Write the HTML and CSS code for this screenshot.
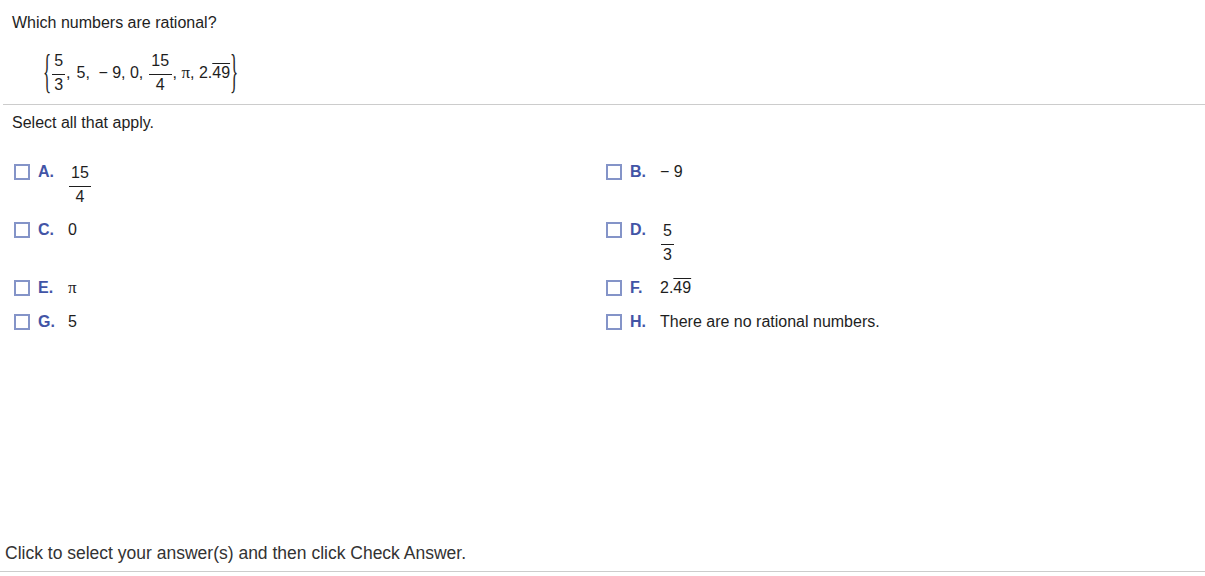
FILE: index.html
```html
<!DOCTYPE html>
<html>
<head>
<meta charset="utf-8">
<title>Which numbers are rational?</title>
<link rel="stylesheet" href="styles.css">
</head>
<body>
<div class="page">
  <div class="question">
    <p class="prompt">Which numbers are rational?</p>
    <div class="set">
      <span class="brace">{</span>
      <span class="frac"><span class="num">5</span><span class="den">3</span></span>
      <span class="txt">,<span class="gap-a"></span>5,<span class="gap-b"></span>− 9, 0, </span>
      <span class="frac wide"><span class="num">15</span><span class="den">4</span></span>
      <span class="txt">, <span class="pi">π</span>, 2.<span class="rep">49</span></span>
      <span class="brace">}</span>
    </div>
  </div>
  <div class="divider"></div>
  <div class="answers">
    <p class="instr">Select all that apply.</p>
    <div class="options">
      <div class="opt">
        <span class="box"></span><span class="letter">A.</span>
        <span class="val"><span class="frac"><span class="num">15</span><span class="den">4</span></span></span>
      </div>
      <div class="opt">
        <span class="box"></span><span class="letter">B.</span>
        <span class="val">− 9</span>
      </div>
      <div class="opt">
        <span class="box"></span><span class="letter">C.</span>
        <span class="val">0</span>
      </div>
      <div class="opt">
        <span class="box"></span><span class="letter">D.</span>
        <span class="val"><span class="frac"><span class="num">5</span><span class="den">3</span></span></span>
      </div>
      <div class="opt">
        <span class="box"></span><span class="letter">E.</span>
        <span class="val"><span class="pi">π</span></span>
      </div>
      <div class="opt">
        <span class="box"></span><span class="letter">F.</span>
        <span class="val">2.<span class="rep">49</span></span>
      </div>
      <div class="opt">
        <span class="box"></span><span class="letter">G.</span>
        <span class="val">5</span>
      </div>
      <div class="opt">
        <span class="box"></span><span class="letter">H.</span>
        <span class="val">There are no rational numbers.</span>
      </div>
    </div>
  </div>
  <div class="footer">Click to select your answer(s) and then click Check Answer.</div>
</div>
</body>
</html>
```
FILE: styles.css
```css
html, body {
  margin: 0;
  padding: 0;
  background: #ffffff;
}
body {
  font-family: "Liberation Sans", Arial, sans-serif;
  font-size: 16px;
  color: #1e1e1e;
}
.page {
  height: 576px;
  display: flex;
  flex-direction: column;
}
.question {
  padding: 13px 0 0 12px;
}
.prompt {
  margin: 0;
  line-height: 20px;
}
.set {
  display: flex;
  align-items: center;
  margin: 17px 0 0 31px;
  height: 46px;
  white-space: pre;
}
.txt {
  line-height: 20px;
}
.gap-a {
  display: inline-block;
  width: 6px;
}
.gap-b {
  display: inline-block;
  width: 8.5px;
}
.brace {
  font-family: "Liberation Serif", "Times New Roman", serif;
  font-size: 17px;
  line-height: 18px;
  display: inline-block;
  transform: scaleY(2.75);
  font-weight: 300;
}
.frac {
  display: inline-flex;
  flex-direction: column;
  align-items: stretch;
  text-align: center;
  padding: 0 1px;
}
.frac .num {
  line-height: 18px;
  padding: 0 2px 4px;
  border-bottom: 1px solid #1e1e1e;
}
.frac.wide .num {
  padding: 0 2.5px 4px;
}
.frac .den {
  line-height: 18px;
  padding-top: 1px;
}
.pi {
  font-family: "Liberation Serif", "Times New Roman", serif;
  font-size: 17px;
}
.rep {
  text-decoration: overline;
}
.divider {
  margin: 8px 0 0 3px;
  border-top: 1px solid #cccccc;
}
.answers {
  padding: 8px 0 0 12px;
}
.instr {
  margin: 0;
  line-height: 20px;
}
.options {
  display: grid;
  grid-template-columns: 592px 1fr;
  margin: 29px 0 0 2px;
}
.opt {
  display: flex;
  align-items: flex-start;
  padding-bottom: 14px;
}
.box {
  flex: none;
  width: 16px;
  height: 16px;
  box-sizing: border-box;
  border: 2px solid #8494c8;
  margin-top: 2px;
}
.letter {
  flex: none;
  width: 30px;
  margin-left: 8px;
  font-weight: bold;
  color: #4254a6;
  line-height: 20px;
}
.val {
  line-height: 20px;
}
.val .frac {
  padding-top: 2px;
}
.footer {
  margin-top: auto;
  padding: 0 0 8px 5px;
  line-height: 20px;
  color: #333333;
  font-size: 17.5px;
  border-bottom: 1px solid #cccccc;
  margin-bottom: 4px;
}
```
